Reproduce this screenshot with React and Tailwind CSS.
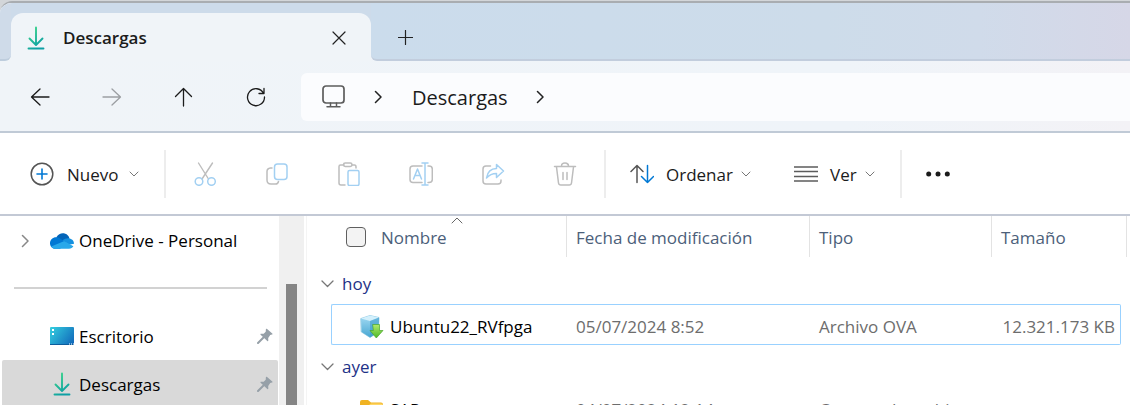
import React from "react";

function Svg({ w, h, children, className = "" }) {
  return (
    <svg
      width={w}
      height={h}
      viewBox={`0 0 ${w} ${h}`}
      fill="none"
      strokeLinecap="round"
      strokeLinejoin="round"
      aria-hidden="true"
      className={`shrink-0 ${className}`}
    >
      {children}
    </svg>
  );
}

function DownloadIcon({ id }) {
  return (
    <Svg w={18} h={24}>
      <defs>
        <linearGradient id={id} x1="0" y1="0" x2="18" y2="24" gradientUnits="userSpaceOnUse">
          <stop offset="0.2" stopColor="#36d08c" />
          <stop offset="0.8" stopColor="#0d9fa4" />
        </linearGradient>
      </defs>
      <path d="M9 1.5V18.5M2.5 12.5 9 19l6.5-6.5M1.5 22.5H16.5" stroke={`url(#${id})`} strokeWidth="1.9" />
    </Svg>
  );
}

function ChevronDown() {
  return (
    <Svg w={10} h={6}>
      <path d="M1 1l4 4 4-4" stroke="#777" strokeWidth="1" />
    </Svg>
  );
}

function ChevronRight({ color = "#222" }) {
  return (
    <Svg w={8} h={14}>
      <path d="M1.5 1.5 7 7l-5.500 5.500" stroke={color} strokeWidth="1.5" />
    </Svg>
  );
}

function PinIcon() {
  return (
    <Svg w={16} h={16}>
      <path d="M9.800.8l5.500 4.600c.4.400.2 1-.3 1.100l-1.800.5-2 3 .1 2.600c0 .6-.6.8-1 .4L3.600 6.800c-.4-.4-.1-1 .4-1l2.700 0 2-2 .2-2.500c0-.6.5-.8.9-.5z" fill="#96a0a8" />
      <path d="M6.5 9.5 1 15" stroke="#96a0a8" strokeWidth="2" />
    </Svg>
  );
}

function CloudIcon() {
  return (
    <Svg w={24} h={16}>
      <path d="M6.200 4.500C8 1.200 10.500.2 12.800.2c3.400 0 5.900 2.200 6.600 5.200L14 9z" fill="#0364b8" />
      <path d="M5.600 15.800C2.500 15.800 0 13.400 0 10.200 0 6.800 2.800 4.200 6 4.200c1.800 0 3 .5 4 1.200l8 5-8 5.400z" fill="#0078d4" />
      <path d="M12.500 7.200c1.600-1.300 3.600-2 5.500-2 3.400 0 6 2.200 6 5.600l-5 1z" fill="#1490df" />
      <path d="M1.200 13.500 13.300 8.400c.5-.2 1-.2 1.400.1l8.700 4.800c-.9 1.600-2.400 2.500-4.300 2.500H5.600c-1.900 0-3.400-.9-4.400-2.300z" fill="#28a8ea" />
    </Svg>
  );
}

function DesktopIcon() {
  return (
    <Svg w={24} h={18}>
      <defs>
        <linearGradient id="desk" x1="0" y1="0" x2="24" y2="18" gradientUnits="userSpaceOnUse">
          <stop stopColor="#35d0e0" />
          <stop offset="1" stopColor="#0f63b8" />
        </linearGradient>
      </defs>
      <rect width="24" height="18" rx="1" fill="url(#desk)" />
      <path d="M2 2h2v2H2zM2 6h2v2H2z" fill="#fff" />
      <path d="M0 17.500h24" stroke="#0c5c9c" />
      <path d="M19 17h1M21 17h1M23 17h1" stroke="#fff" strokeLinecap="butt" />
    </Svg>
  );
}

function PackageIcon() {
  return (
    <Svg w={24} h={24}>
      <defs>
        <linearGradient id="pk" x1="0" y1="0" x2="0" y2="1">
          <stop stopColor="#a4dcf4" />
          <stop offset="1" stopColor="#48a6d2" />
        </linearGradient>
        <linearGradient id="gr" x1="0" y1="0" x2="0" y2="1">
          <stop stopColor="#b2ea6c" />
          <stop offset="1" stopColor="#4cb828" />
        </linearGradient>
      </defs>
      <path d="M1 3.500 10 .5l9 2-.5 14.500L10 22.500 1.500 17z" fill="url(#pk)" stroke="#6db8da" strokeWidth=".6" />
      <path d="M1 3.500 10 .5l9 2-9 3.500z" fill="#d3f0fc" />
      <path d="M10 6v16.500l8.500-5.500.5-14.500z" fill="#3d9bcb" opacity=".55" />
      <path d="M13 9.500h6.500v6h3.500L16.300 23 10 15.500h3z" fill="url(#gr)" stroke="#4aa62c" strokeWidth=".7" />
    </Svg>
  );
}

function FolderIcon() {
  return (
    <Svg w={24} h={20}>
      <path d="M0 2Q0 0 2 0h6l3 2.500h10Q23 2.500 23 4.500V18H0z" fill="#f0b323" />
      <path d="M0 5h9l2-1.500h10q2 0 2 2V18q0 2-2 2H2q-2 0-2-2z" fill="#ffd767" />
    </Svg>
  );
}

const G = "#bdbdbd";
const B = "#a3d0f2";

const editActions = [
  {
    label: "Cortar",
    art: (
      <>
        <path d="M5.500 1l10 16M19.500 1 9 17" stroke={G} strokeWidth="1.400" />
        <circle cx="6" cy="19.500" r="3.800" stroke={B} strokeWidth="1.500" />
        <circle cx="18.500" cy="19.500" r="3.800" stroke={B} strokeWidth="1.500" />
      </>
    ),
  },
  {
    label: "Copiar",
    art: (
      <>
        <path d="M7 6H5.500Q2 6.500 2 9.500V18q0 4 4 4H10.500q2.500 0 3-2.500" stroke={G} strokeWidth="1.500" />
        <rect x="9.500" y="2" width="12.500" height="15.500" rx="3" stroke={B} strokeWidth="1.500" />
      </>
    ),
  },
  {
    label: "Pegar",
    art: (
      <>
        <path d="M7 3H3.500Q2 3 2 4.500V21q0 2 2 2H8M15 3h2.500Q19 3 19 5v1" stroke={G} strokeWidth="1.500" />
        <rect x="6.500" y="1" width="8.500" height="3.500" rx="1.700" stroke={G} strokeWidth="1.500" />
        <rect x="11" y="8.500" width="11" height="15" rx="1.500" stroke={B} strokeWidth="1.500" />
      </>
    ),
  },
  {
    label: "Cambiar nombre",
    art: (
      <>
        <path d="M13 4H4Q1 4 1 7v10.500q0 3 3 3h9M19 4h1q3.300 0 3.300 3v10.500q0 3-3.300 3h-1" stroke={G} strokeWidth="1.500" />
        <path d="M4.500 17 8.500 7l4 10M6 13.500h5M16 1.500v21M13 1h6M13 23h6" stroke={B} strokeWidth="1.500" />
      </>
    ),
  },
  {
    label: "Compartir",
    art: (
      <>
        <path d="M9.500 4H5Q2 4 2 7v12q0 3 3 3h12q3 0 3-3v-1" stroke={G} strokeWidth="1.500" />
        <path d="M15.500 2.500 22.500 9l-7 6.500V11.500C11 11.500 8.500 12.500 5.500 16 6.500 10 10 6.500 15.500 6.500z" stroke={B} strokeWidth="1.500" />
      </>
    ),
  },
  {
    label: "Eliminar",
    art: (
      <path d="M1.500 4.500H22.500M8.500 4a3.500 3 0 0 1 7 0M3.500 5l2 16q.3 2 2.300 2h8.400q2 0 2.300-2l2-16M10 10.500v7M14 10.500v7" stroke={G} strokeWidth="1.500" />
    ),
  },
];

function NavButton({ label, disabled, children }) {
  return (
    <button type="button" aria-label={label} disabled={disabled} className="flex size-10 items-center justify-center">
      {children}
    </button>
  );
}

function Separator() {
  return <div className="h-12 w-0.5 shrink-0 bg-[#ededed]" />;
}

function GroupRow({ name }) {
  return (
    <tr className="h-[42px]">
      <td colSpan={6} className="pt-0.5 pl-3.5 text-left">
        <button type="button" className="flex items-center gap-2 text-[#1e3287]">
          <Svg w={13} h={8}>
            <path d="M1 1l5.500 5.500L12 1" stroke="#777" strokeWidth="1.300" />
          </Svg>
          {name}
        </button>
      </td>
    </tr>
  );
}

function FileRow({ icon, name, date, type, size, focused }) {
  const edge = focused ? "border-[#99d1ff]" : "border-transparent";
  return (
    <tr className="h-[41px] text-[#6d6d6d]">
      <td />
      <td className={`rounded-l-xs border-y border-l pt-1 pl-7 ${edge}`}>
        <div className="flex items-center gap-1.5 whitespace-nowrap text-black">
          {icon}
          {name}
        </div>
      </td>
      <td className={`border-y pt-1 pl-[9px] whitespace-nowrap ${edge}`}>{date}</td>
      <td className={`border-y pt-1 pl-[9px] whitespace-nowrap ${edge}`}>{type}</td>
      <td className={`rounded-r-xs border-y border-r pt-1 pr-[5px] text-right whitespace-nowrap ${edge}`}>{size}</td>
      <td />
    </tr>
  );
}

export default function App() {
  return (
    <div className="flex h-screen flex-col overflow-hidden bg-[#d3d6d9] pt-px font-['Open_Sans','Noto_Sans',sans-serif] text-[17px] leading-6 text-[#1b1b1b]">
      <div className="flex min-h-0 flex-1 flex-col overflow-hidden rounded-tl-xl border-t-2 border-[#a9adb1] bg-white">
        <header className="shrink-0 border-b-2 border-[#c0cad6] bg-[linear-gradient(90deg,#f0f4f8_0%,#eff4f9_75%,#f3f2f6_100%)]">
          <div className="flex h-[58px]">
            <div className="w-[11px] shrink-0 rounded-br-md border-b-2 border-[#becddd] bg-[#cfdbe9]" />
            <div className="w-[360px] shrink-0 bg-[linear-gradient(#cddbea_50%,#f0f4f8_50%)] pt-2.5">
              <div className="flex h-12 items-center rounded-t-xl bg-[#f0f4f8] pt-0.5 pr-[25px] pl-4">
                <DownloadIcon id="dl-tab" />
                <span className="ml-[18px] flex-1 font-semibold">Descargas</span>
                <button type="button" aria-label="Cerrar pestaña">
                  <Svg w={14} h={14}>
                    <path d="M1 1l12 12M13 1 1 13" stroke="#222" strokeWidth="1.200" />
                  </Svg>
                </button>
              </div>
            </div>
            <div className="flex flex-1 items-center rounded-bl-md border-b-2 border-[#c2cddd] bg-[linear-gradient(90deg,#cbdcec_0%,#cddcea_60%,#d0dbea_80%,#d6d7e7_100%)] pt-3 pl-[27px]">
              <button type="button" aria-label="Nueva pestaña">
                <Svg w={15} h={15}>
                  <path d="M7.500.5v14M.5 7.500h14" stroke="#222" strokeWidth="1.200" />
                </Svg>
              </button>
            </div>
          </div>
          <nav className="flex items-center pt-3 pb-2.5 pl-5">
            <div className="flex gap-8">
              <NavButton label="Atrás">
                <Svg w={20} h={20}>
                  <path d="M10 2 1.500 10l8.500 8M1.500 10H19" stroke="#1b1b1b" strokeWidth="1.300" />
                </Svg>
              </NavButton>
              <NavButton label="Adelante" disabled>
                <Svg w={20} h={20}>
                  <path d="M10 2l8.500 8-8.500 8M18.500 10H1" stroke="#9c9fa3" strokeWidth="1.300" />
                </Svg>
              </NavButton>
              <NavButton label="Subir">
                <Svg w={20} h={20}>
                  <path d="M1.500 9.500 9.500 1.500l8 8M9.500 1.500V19" stroke="#1b1b1b" strokeWidth="1.300" />
                </Svg>
              </NavButton>
              <NavButton label="Actualizar">
                <Svg w={20} h={20}>
                  <path d="M17.500 6.200A8.500 8.500 0 1 0 18.500 10M18 1.500v5H13" stroke="#1b1b1b" strokeWidth="1.300" />
                </Svg>
              </NavButton>
            </div>
            <div className="ml-[25px] flex h-12 flex-1 items-center rounded-l-md bg-[#fbfcfe] pl-5 text-[20px]">
              <Svg w={24} h={23} className="mb-0.5">
                <rect x="2" y="1" width="21" height="17" rx="3" stroke="#5c5c5c" strokeWidth="1.700" />
                <path d="M9.500 18v3.500M15.500 18v3.500M6 21.800h13" stroke="#5c5c5c" strokeWidth="1.500" />
              </Svg>
              <span className="ml-[29px] flex">
                <ChevronRight />
              </span>
              <button type="button" className="ml-[30px] pt-0.5">
                Descargas
              </button>
              <span className="ml-7 flex">
                <ChevronRight />
              </span>
            </div>
          </nav>
        </header>

        <div role="toolbar" aria-label="Comandos" className="flex h-[83px] shrink-0 items-center border-b-2 border-[#c3c9d5] pl-[30px]">
          <button type="button" className="flex w-[134px] items-center">
            <Svg w={24} h={24}>
              <circle cx="12" cy="12" r="10.800" stroke="#555" strokeWidth="1.500" />
              <path d="M12 7v10M7 12h10" stroke="#0078d4" strokeWidth="1.600" />
            </Svg>
            <span className="mr-2.5 ml-[13px] pt-0.5">Nuevo</span>
            <ChevronDown />
          </button>
          <Separator />
          <div className="flex gap-12 px-[27px]">
            {editActions.map((a) => (
              <button key={a.label} type="button" aria-label={a.label} disabled>
                <Svg w={24} h={24}>{a.art}</Svg>
              </button>
            ))}
          </div>
          <Separator />
          <button type="button" className="ml-6 flex w-[164px] items-center">
            <Svg w={24} h={20}>
              <path d="M1 7.500 7 1.500l6 6M7 1.500V18.500" stroke="#555" strokeWidth="1.500" />
              <path d="M11.500 12.500l6 6 6-6M17.500 18.500V1.500" stroke="#0078d4" strokeWidth="1.500" />
            </Svg>
            <span className="mr-2 ml-3 pt-0.5">Ordenar</span>
            <ChevronDown />
          </button>
          <button type="button" className="flex w-[106px] items-center">
            <Svg w={24} h={18}>
              <path d="M0 2h24M0 6.500h24M0 11.500h24M0 16h24" stroke="#5c5c5c" strokeWidth="1.500" strokeLinecap="butt" />
            </Svg>
            <span className="mr-2 ml-3 pt-0.5">Ver</span>
            <ChevronDown />
          </button>
          <Separator />
          <button type="button" aria-label="Ver más" className="ml-6">
            <Svg w={24} h={6}>
              <circle cx="2.700" cy="3" r="2.500" fill="#1b1b1b" />
              <circle cx="12" cy="3" r="2.500" fill="#1b1b1b" />
              <circle cx="21.300" cy="3" r="2.500" fill="#1b1b1b" />
            </Svg>
          </button>
        </div>

        <div className="flex min-h-0 flex-1">
          <aside className="w-[279px] shrink-0 overflow-hidden text-black">
            <button type="button" className="flex h-12 w-full items-center pt-0.5 pl-[21px]">
              <ChevronRight color="#888" />
              <span className="mr-[5px] ml-[21px] flex">
                <CloudIcon />
              </span>
              OneDrive - Personal
            </button>
            <div className="flex h-12 items-center pr-3 pl-3.5">
              <hr className="w-full border-t-2 border-[#d2d2d2]" />
            </div>
            <a href="#escritorio" className="flex h-12 items-center pr-1.5 pl-[50px]">
              <DesktopIcon />
              <span className="ml-[5px] flex-1 pt-0.5">Escritorio</span>
              <PinIcon />
            </a>
            <a href="#descargas" className="mr-px ml-0.5 flex h-12 items-center rounded-xs bg-[#d9d9d9] pr-[5px] pl-[51px]">
              <DownloadIcon id="dl-side" />
              <span className="ml-2 flex-1 pt-0.5">Descargas</span>
              <PinIcon />
            </a>
          </aside>
          <div className="flex w-[25px] shrink-0 justify-center bg-[#f0f0f0] pt-[68px]">
            <div className="w-[11px] bg-[#858585]" />
          </div>
          <main className="ml-0.5 min-w-0 flex-1 overflow-hidden border-l border-[#f4f4f4] pr-[3px]">
            <table className="w-full table-fixed border-separate border-spacing-0 text-left">
              <colgroup>
                <col className="w-6" />
                <col />
                <col className="w-[243px]" />
                <col className="w-[182px]" />
                <col className="w-[129px]" />
                <col className="w-[6px]" />
              </colgroup>
              <thead className="text-[#4c607a]">
                <tr className="h-[41px]">
                  <td />
                  <th className="relative border-r border-[#e3e3e3] pl-[15px] font-normal">
                    <div className="flex items-center gap-[15px]">
                      <input
                        type="checkbox"
                        aria-label="Seleccionar todo"
                        className="size-5 appearance-none rounded-sm border border-[#5f5f5f] bg-[#f3f3f3]"
                      />
                      <span className="pt-0.5">Nombre</span>
                    </div>
                    <Svg w={12} h={7} className="absolute top-px left-[120px]">
                      <path d="M1 6l5-5 5 5" stroke="#666" strokeWidth="1" />
                    </Svg>
                  </th>
                  <th className="border-r border-[#e3e3e3] pt-0.5 pl-[9px] font-normal whitespace-nowrap">Fecha de modificación</th>
                  <th className="border-r border-[#e3e3e3] pt-0.5 pl-[9px] font-normal">Tipo</th>
                  <th className="pt-0.5 pl-[9px] font-normal">Tamaño</th>
                  <td className="border-r border-[#e3e3e3]" />
                </tr>
              </thead>
              <tbody>
                <tr className="h-[5px]">
                  <td colSpan={6} />
                </tr>
                <GroupRow name="hoy" />
                <FileRow
                  icon={<PackageIcon />}
                  name="Ubuntu22_RVfpga"
                  date="05/07/2024 8:52"
                  type="Archivo OVA"
                  size="12.321.173 KB"
                  focused
                />
                <GroupRow name="ayer" />
                <FileRow icon={<FolderIcon />} name="SAP" date="04/07/2024 12:14" type="Carpeta de archivos" size="" />
              </tbody>
            </table>
          </main>
        </div>
      </div>
    </div>
  );
}
